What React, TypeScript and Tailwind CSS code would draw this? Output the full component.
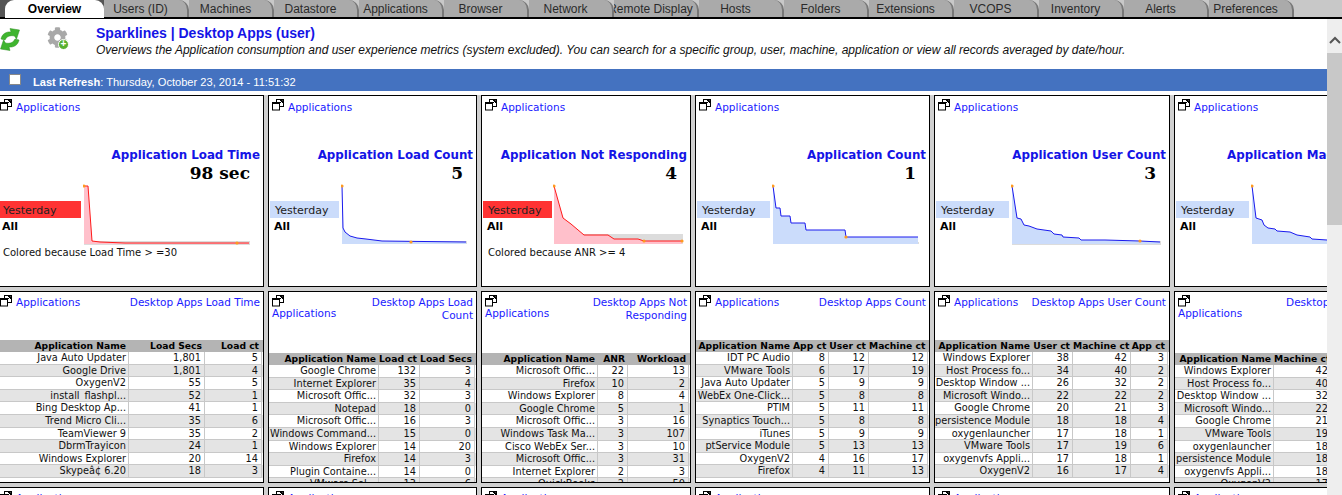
import { FaCog } from "react-icons/fa";

const tabs = ["Overview", "Users (ID)", "Machines", "Datastore", "Applications", "Browser", "Network", "Remote Display", "Hosts", "Folders", "Extensions", "VCOPS", "Inventory", "Alerts", "Preferences"];

type Pt = [number, number];

type Kpi = {
  title: string;
  value: string;
  alert: boolean;
  boxW: number;
  gap: number;
  points: Pt[];
  dots: Pt[];
  band: [number, number];
  note?: string;
};

type Tbl = {
  title: string;
  wrap: boolean;
  cols: number[];
  head: string[];
  rows: string[][];
};

const kpis: Kpi[] = [
  {
    title: "Application Load Time", value: "98 sec", alert: true, boxW: 81, gap: 3,
    points: [[0, 0], [4, 0], [8, 55], [16, 56], [41, 57], [165, 57]],
    dots: [[0, 0], [153, 57]], band: [55, 59], note: "Colored because Load Time > =30",
  },
  {
    title: "Application Load Count", value: "5", alert: false, boxW: 69, gap: 3,
    points: [[0, 0], [1, 42], [3, 46], [8, 50], [15, 52], [24, 53], [40, 55], [124, 56]],
    dots: [[0, 0], [69, 56]], band: [55, 58],
  },
  {
    title: "Application Not Responding", value: "4", alert: true, boxW: 69, gap: 2,
    points: [[0, 0], [9, 32], [17, 38], [30, 49], [54, 49], [60, 53], [84, 53], [90, 55], [128, 55]],
    dots: [[0, 0], [90, 55], [128, 55]], band: [48, 58], note: "Colored because ANR >= 4",
  },
  {
    title: "Application Count", value: "1", alert: false, boxW: 73, gap: 3,
    points: [[0, 0], [3, 22], [7, 22], [8, 30], [17, 30], [18, 37], [32, 37], [33, 44], [72, 44], [73, 51], [145, 51]],
    dots: [[0, 0], [73, 51]], band: [56, 58],
  },
  {
    title: "Application User Count", value: "3", alert: false, boxW: 73, gap: 3,
    points: [[0, 0], [5, 32], [9, 33], [12, 39], [17, 40], [25, 43], [39, 45], [42, 48], [50, 49], [51, 51], [67, 52], [69, 54], [93, 54], [128, 55], [148, 56]],
    dots: [[0, 0], [128, 55]], band: [55, 59],
  },
  {
    title: "Application Machine Count", value: "3", alert: false, boxW: 73, gap: 3,
    points: [[0, 0], [4, 32], [10, 34], [12, 39], [16, 42], [23, 43], [25, 45], [38, 46], [45, 49], [58, 51], [60, 53], [75, 54], [148, 56]],
    dots: [[0, 0]], band: [56, 58],
  },
];

const tables: Tbl[] = [
  {
    title: "Desktop Apps Load Time", wrap: false, cols: [129, 76, 57], head: ["Application Name", "Load Secs", "Load ct"],
    rows: [["Java Auto Updater", "1,801", "5"], ["Google Drive", "1,801", "4"], ["OxygenV2", "55", "5"], ["install_flashpl...", "52", "1"], ["Bing Desktop Ap...", "41", "1"], ["Trend Micro Cli...", "35", "6"], ["TeamViewer 9", "35", "2"], ["DbrmTrayicon", "24", "1"], ["Windows Explorer", "20", "14"], ["Skypeâ¢ 6.20", "18", "3"]],
  },
  {
    title: "Desktop Apps Load Count", wrap: true, cols: [110, 41, 55], head: ["Application Name", "Load ct", "Load Secs"],
    rows: [["Google Chrome", "132", "3"], ["Internet Explorer", "35", "4"], ["Microsoft Offic...", "32", "3"], ["Notepad", "18", "0"], ["Microsoft Offic...", "16", "3"], ["Windows Command...", "15", "0"], ["Windows Explorer", "14", "20"], ["Firefox", "14", "3"], ["Plugin Containe...", "14", "0"], ["VMware Sol...", "13", "6"]],
  },
  {
    title: "Desktop Apps Not Responding", wrap: true, cols: [116, 30, 61], head: ["Application Name", "ANR", "Workload"],
    rows: [["Microsoft Offic...", "22", "13"], ["Firefox", "10", "2"], ["Windows Explorer", "8", "4"], ["Google Chrome", "5", "1"], ["Microsoft Offic...", "3", "16"], ["Windows Task Ma...", "3", "107"], ["Cisco WebEx Ser...", "3", "10"], ["Microsoft Offic...", "3", "31"], ["Internet Explorer", "2", "3"], ["QuickBooks", "2", "50"]],
  },
  {
    title: "Desktop Apps Count", wrap: false, cols: [97, 36, 40, 59], head: ["Application Name", "App ct", "User ct", "Machine ct"],
    rows: [["IDT PC Audio", "8", "12", "12"], ["VMware Tools", "6", "17", "19"], ["Java Auto Updater", "5", "9", "9"], ["WebEx One-Click...", "5", "8", "8"], ["PTIM", "5", "11", "11"], ["Synaptics Touch...", "5", "8", "8"], ["iTunes", "5", "9", "9"], ["ptService Module", "5", "13", "13"], ["OxygenV2", "4", "16", "17"], ["Firefox", "4", "11", "13"]],
  },
  {
    title: "Desktop Apps User Count", wrap: false, cols: [98, 40, 58, 37], head: ["Application Name", "User ct", "Machine ct", "App ct"],
    rows: [["Windows Explorer", "38", "42", "3"], ["Host Process fo...", "34", "40", "2"], ["Desktop Window ...", "26", "32", "2"], ["Microsoft Windo...", "22", "22", "2"], ["Google Chrome", "20", "21", "3"], ["persistence Module", "18", "18", "4"], ["oxygenlauncher", "17", "18", "1"], ["VMware Tools", "17", "19", "6"], ["oxygenvfs Appli...", "17", "18", "1"], ["OxygenV2", "16", "17", "4"]],
  },
  {
    title: "Desktop Apps Machine Count", wrap: true, cols: [99, 58, 40, 37], head: ["Application Name", "Machine ct", "User ct", "App ct"],
    rows: [["Windows Explorer", "42", "38", "3"], ["Host Process fo...", "40", "34", "2"], ["Desktop Window ...", "32", "26", "2"], ["Microsoft Windo...", "22", "22", "2"], ["Google Chrome", "21", "20", "3"], ["VMware Tools", "19", "17", "6"], ["oxygenlauncher", "18", "17", "1"], ["persistence Module", "18", "18", "4"], ["oxygenvfs Appli...", "18", "17", "1"], ["OxygenV2", "17", "16", "4"]],
  },
];

const PopIcon = () => (
  <svg width="12" height="12" viewBox="0 0 12 12" className="block shrink-0">
    <rect x="4.5" y="0.5" width="7" height="7" fill="#fff" stroke="#000" />
    <path d="M7 5 L10 2 M8 1.5 H10.5 V4" stroke="#000" fill="none" />
    <rect x="0.5" y="3.5" width="7" height="7.5" fill="#fff" stroke="#000" />
    <rect x="0.5" y="3.5" width="7" height="1.5" fill="#000" />
  </svg>
);

const RefreshIcon = () => (
  <svg width="20" height="23" viewBox="0 0 20 23" className="block">
    <path d="M1 11 C2 6 6 3.500 11 4 L10 0.500 L19.500 2 L16.500 11 L14.500 8 C10 7 6.500 8.500 5 12 Z" fill="#3fb52e" stroke="#2f8f22" strokeWidth="0.5" />
    <path d="M19 12 C18 17 14 19.500 9 19 L10 22.500 L0.500 21 L3.500 12 L5.500 15 C10 16 13.500 14.500 15 11 Z" fill="#3fb52e" stroke="#2f8f22" strokeWidth="0.5" />
  </svg>
);

const Spark = ({ k }: { k: Kpi }) => {
  const last = k.points[k.points.length - 1][0];
  const line = k.points.map((p) => `${p[0] + 1},${p[1] + 2}`).join(" ");
  const fill = `1,60 ${line} ${last + 1},60`;
  return (
    <svg width={last + 4} height="62" className="shrink-0 mt-[1px]">
      <rect x="1" y={k.band[0] + 2} width={last + 1} height={k.band[1] - k.band[0]} fill="#dcdcdc" />
      <polygon points={fill} fill={k.alert ? "#ffc0cb" : "#cbdcfb"} />
      <polyline points={line} fill="none" stroke={k.alert ? "#ff1a1a" : "#1a1aee"} strokeWidth="1" />
      {k.dots.map((d, i) => (
        <circle key={i} cx={d[0] + 1} cy={d[1] + 2} r="1.6" fill="#ff9a1f" />
      ))}
    </svg>
  );
};

const KpiCard = ({ k, first }: { k: Kpi; first: boolean }) => (
  <div className={`bg-white border border-black overflow-hidden ${first ? "border-l-0" : ""}`}>
    <div className={`h-[50px] pt-[3px] text-[10.5px] leading-[16px] text-[#1a1aff] flex items-start gap-[4px] ${first ? "" : "pl-[3px]"}`}>
      <PopIcon />
      <span>Applications</span>
    </div>
    <div className="text-right pr-[3px] pt-px text-[11.85px] leading-[16px] font-bold text-[#1414e6] whitespace-nowrap">{k.title}</div>
    <div className="text-right pr-[13px] h-[20px] text-[17px] leading-[20px] font-bold text-black font-['DejaVu_Serif',serif]">{k.value}</div>
    <div className={`flex items-start ${first ? "" : "pl-px"}`}>
      <div className="shrink-0 pt-[18px]" style={{ width: k.boxW, marginRight: k.gap - 1 }}>
        <div className={`h-[17px] text-[11px] leading-[19px] text-[#222] ${first ? "pl-[3px]" : "pl-[5px]"} ${k.alert ? "bg-[#ff3333]" : "bg-[#cbdcfb]"}`}>Yesterday</div>
        <div className={`mt-[1px] text-[11px] leading-[16px] font-bold text-black ${first ? "pl-[2px]" : "pl-[4px]"}`}>All</div>
      </div>
      <Spark k={k} />
    </div>
    {k.note && <div className={`text-[10px] leading-[14px] text-[#111] whitespace-nowrap ${first ? "pl-[3px]" : "pl-[6px]"}`}>{k.note}</div>}
  </div>
);

const TableCard = ({ t, first }: { t: Tbl; first: boolean }) => (
  <div className={`bg-white border border-black overflow-hidden ${first ? "border-l-0" : ""}`}>
    <div className={`flex justify-between items-start pt-[3px] pr-[3px] text-[10.5px] leading-[13px] text-[#1a1aff] ${t.wrap ? "h-[61px]" : "h-[48px]"} ${first ? "" : "pl-[3px]"}`}>
      <div className={t.wrap ? "w-[70px]" : "flex gap-[4px]"}>
        <PopIcon />
        <div className={t.wrap ? "leading-[12px]" : "leading-[14px]"}>Applications</div>
      </div>
      <div className={`text-right leading-[13px] mt-[1px] ${t.wrap ? "w-[122px]" : "whitespace-nowrap"}`}>{t.title}</div>
    </div>
    <div className="grid text-[9.2px] leading-[12px] font-bold h-[12px] bg-[#b4b4b4] text-black" style={{ gridTemplateColumns: t.cols.map((c) => `${c}px`).join(" ") }}>
      {t.head.map((h) => (
        <div key={h} className="text-right pr-[3px] whitespace-nowrap">{h}</div>
      ))}
    </div>
    {t.rows.map((r, i) => (
      <div key={i} className={`grid h-[12.6px] text-[9.75px] leading-[12px] text-[#111] ${i % 2 ? "bg-[#e4e4e4]" : "bg-white"}`} style={{ gridTemplateColumns: t.cols.map((c) => `${c}px`).join(" ") }}>
        {r.map((c, j) => (
          <div key={j} className={`text-right whitespace-nowrap border-r border-b border-[#c8c8c8] overflow-hidden ${j === 0 ? "pr-[2px]" : "pr-[3px]"}`}>{c}</div>
        ))}
      </div>
    ))}
  </div>
);

const StubCard = ({ first }: { first: boolean }) => (
  <div className={`bg-white border border-black overflow-hidden ${first ? "border-l-0" : ""}`}>
    <div className={`flex gap-[4px] pt-[3px] text-[10.5px] leading-[14px] text-[#1a1aff] ${first ? "" : "pl-[3px]"}`}>
      <PopIcon />
      <span>Applications</span>
    </div>
  </div>
);

export default function App() {
  return (
    <div className="h-[495px] w-[1342px] overflow-hidden bg-white flex flex-col font-['Liberation_Sans',sans-serif]">
      <div className="flex h-[19px] shrink-0 bg-[#c8c8c8] border-b-2 border-black">
        {tabs.map((t, i) =>
          i === 0 ? (
            <div key={t} className="w-[104px] shrink-0 bg-[#555]">
              <div className="ml-[5px] h-[18px] rounded-t-[9px] bg-white flex items-center justify-center text-[12px] font-bold text-black">{t}</div>
            </div>
          ) : (
            <div key={t} className="w-[85px] shrink-0 bg-[#aaa] rounded-tr-[10px] border-r-2 border-[#777] pr-[10px] flex items-center justify-center overflow-hidden text-[12px] text-[#2a2a2a] whitespace-nowrap">
              {t}
            </div>
          )
        )}
      </div>
      <div className="flex flex-1 min-h-0">
        <div className="w-[1327px] shrink-0 flex flex-col overflow-hidden">
          <div className="h-[50px] shrink-0 flex items-start pt-[6px]">
            <div className="w-[47px] shrink-0 pt-[3px]">
              <RefreshIcon />
            </div>
            <div className="w-[49px] shrink-0 relative pt-[2px]">
              <FaCog className="w-[21px] h-[21px] text-[#a8a8a8]" />
              <span className="absolute left-[11px] top-[14px] w-[11px] h-[11px] rounded-full bg-[#58b030] border border-white text-white text-[10px] leading-[8px] text-center font-bold">+</span>
            </div>
            <div>
              <div className="text-[14px] leading-[16px] font-bold text-[#1414e6]">Sparklines | Desktop Apps (user)</div>
              <div className="mt-[2px] text-[12px] leading-[15px] italic text-[#111] whitespace-nowrap">Overviews the Application consumption and user experience metrics (system excluded).  You can search for a specific group, user, machine, application or view all records averaged by date/hour.</div>
            </div>
          </div>
          <div className="h-[22px] shrink-0 bg-[#4472c0] flex items-start text-white text-[11.1px] leading-[16px]">
            <div className="ml-[9px] mr-[12px] mt-[5px] w-[12px] h-[11px] bg-white border border-[#888]" />
            <span className="mt-[5px]"><b>Last Refresh</b>: Thursday, October 23, 2014 - 11:51:32</span>
          </div>
          <div className="mt-[4px] flex-1 overflow-hidden bg-[#d0d0d0] font-['DejaVu_Sans',sans-serif]">
            <div className="grid grid-cols-[264px_209px_210px_235px_236px_236px] grid-rows-[192px_192px_192px] gap-[4px] w-[1410px]">
              {kpis.map((k, i) => (
                <KpiCard key={k.title} k={k} first={i === 0} />
              ))}
              {tables.map((t, i) => (
                <TableCard key={t.title} t={t} first={i === 0} />
              ))}
              {kpis.map((k, i) => (
                <StubCard key={k.title} first={i === 0} />
              ))}
            </div>
          </div>
        </div>
        <div className="flex-1 bg-[#eee] flex flex-col">
          <div className="h-[34px] flex items-end justify-center pb-[9px]">
            <svg width="12" height="8" viewBox="0 0 12 8"><path d="M1 7 L6 2 L11 7" fill="none" stroke="#555" strokeWidth="2" /></svg>
          </div>
          <div className="h-[172px] bg-[#c8c8c8]" />
        </div>
      </div>
    </div>
  );
}
